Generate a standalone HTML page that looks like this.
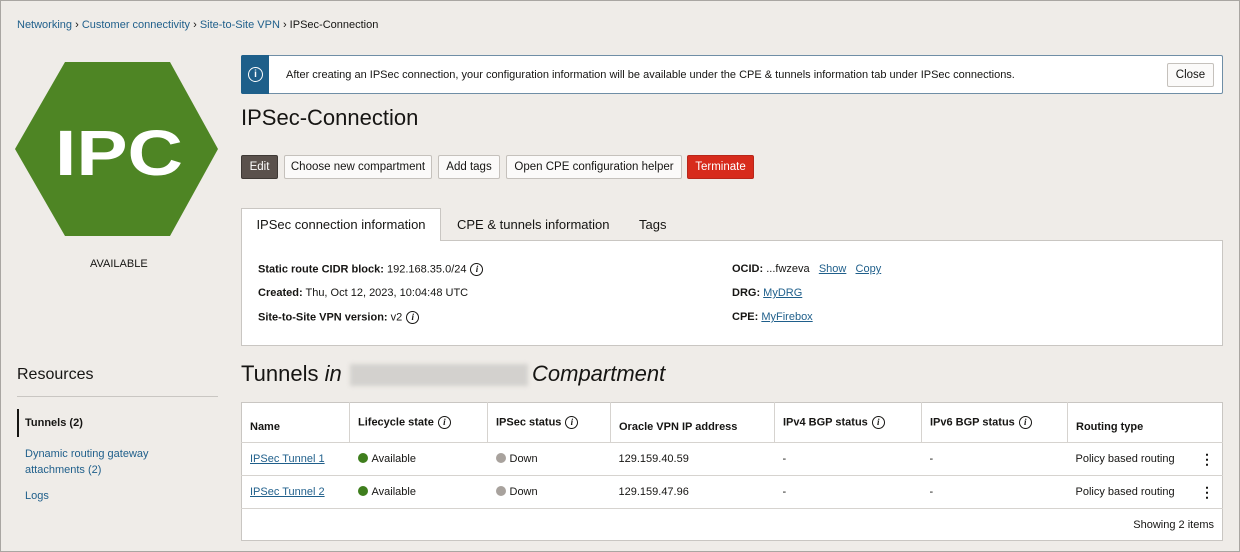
<!DOCTYPE html>
<html><head><meta charset="utf-8">
<style>
*{box-sizing:border-box;margin:0;padding:0}
body{width:1240px;height:552px;overflow:hidden;background:#efece8;font-family:"Liberation Sans",Arial,sans-serif;color:#161513;position:relative;font-size:11px}
.frame{position:absolute;inset:0;border:1px solid #a9a6a2}
.a{position:absolute;white-space:nowrap}
a,.lnk{color:#1f5f8b}
.u{text-decoration:underline}
.btn{position:absolute;top:155px;height:24px;border:1px solid #c5c1bc;border-radius:2px;background:#fbfaf9;font-size:11.5px;line-height:22px;text-align:center;color:#161513}
.i{display:inline-block;width:13px;height:13px;border:1px solid #161513;border-radius:50%;font:italic bold 9px "Liberation Serif",serif;line-height:11px;text-align:center;vertical-align:middle;margin-left:4px}
table{position:absolute;left:241px;top:402px;width:982px;border-collapse:collapse;background:#fff;border:1px solid #c9c6c2;font-size:11px}
td,th{text-align:left;padding:0 8px;border-bottom:1px solid #d6d3cf}
th{height:40px;font-weight:bold;border-right:1px solid #d6d3cf;vertical-align:middle}
th:last-child{border-right:none}
td{height:33px;position:relative}
.dot{display:inline-block;width:10px;height:10px;border-radius:50%;vertical-align:-1px;margin-right:4px}
.keb{position:absolute;right:8px;top:8px;font-weight:bold;font-size:14px;line-height:16px}
</style></head><body>
<div class="frame"></div>
<div class="a" style="left:17px;top:19px;font-size:11px"><span class="lnk">Networking</span> › <span class="lnk">Customer connectivity</span> › <span class="lnk">Site-to-Site VPN</span> › IPSec-Connection</div>

<svg class="a" style="left:0;top:0" width="230" height="250"><polygon points="15,149 65,62 170,62 218,149 170,236 65,236" fill="#4e8524"/><text x="119" y="175" text-anchor="middle" font-family="Liberation Sans" font-weight="bold" font-size="64" textLength="128" lengthAdjust="spacingAndGlyphs" fill="#fff">IPC</text></svg>
<div class="a" style="left:90px;top:258px;font-size:11px">AVAILABLE</div>

<div class="a" style="left:17px;top:366px;font-size:16px">Resources</div>
<div class="a" style="left:17px;top:396px;width:201px;height:1px;background:#c9c6c2"></div>
<div class="a" style="left:17px;top:409px;width:2px;height:28px;background:#161513"></div>
<div class="a" style="left:25px;top:417px;font-weight:bold">Tunnels (2)</div>
<div class="a lnk" style="left:25px;top:446px;line-height:16px">Dynamic routing gateway<br>attachments (2)</div>
<div class="a lnk" style="left:25px;top:490px">Logs</div>

<div class="a" style="left:241px;top:55px;width:982px;height:39px;background:#fff;border:1px solid #6f8ea6;border-radius:2px"></div>
<div class="a" style="left:241px;top:55px;width:28px;height:39px;background:#1e5f8a;border-radius:2px 0 0 2px"></div>
<div class="a" style="left:248px;top:67px;width:15px;height:15px;border:1.5px solid #fff;border-radius:50%;color:#fff;font:bold 10px 'Liberation Sans';text-align:center;line-height:13px">i</div>
<div class="a" style="left:286px;top:69px;font-size:11px">After creating an IPSec connection, your configuration information will be available under the CPE &amp; tunnels information tab under IPSec connections.</div>
<div class="a" style="left:1167px;top:63px;width:47px;height:24px;border:1px solid #c5c1bc;border-radius:2px;background:#fbfaf9;text-align:center;line-height:22px;font-size:11.5px">Close</div>

<div class="a" style="left:241px;top:105px;font-size:22px">IPSec-Connection</div>

<div class="btn" style="left:241px;width:37px;background:#5a514c;border-color:#3e3935;color:#fff">Edit</div>
<div class="btn" style="left:284px;width:148px">Choose new compartment</div>
<div class="btn" style="left:438px;width:62px">Add tags</div>
<div class="btn" style="left:506px;width:176px">Open CPE configuration helper</div>
<div class="btn" style="left:687px;width:67px;background:#d72b1c;border-color:#b8261a;color:#fff">Terminate</div>

<div class="a" style="left:241px;top:240px;width:982px;height:106px;background:#fff;border:1px solid #c9c6c2"></div>
<div class="a" style="left:241px;top:208px;width:200px;height:33px;background:#fff;border:1px solid #c9c6c2;border-bottom:none;font-size:13px;text-align:center;line-height:32px">IPSec connection information</div>
<div class="a" style="left:457px;top:217px;font-size:13px">CPE &amp; tunnels information</div>
<div class="a" style="left:639px;top:217px;font-size:13px">Tags</div>

<div class="a" style="left:258px;top:263px"><b>Static route CIDR block:</b> 192.168.35.0/24<span class="i">i</span></div>
<div class="a" style="left:258px;top:287px"><b>Created:</b> Thu, Oct 12, 2023, 10:04:48 UTC</div>
<div class="a" style="left:258px;top:311px"><b>Site-to-Site VPN version:</b> v2<span class="i">i</span></div>
<div class="a" style="left:732px;top:263px"><b>OCID:</b> ...fwzeva &nbsp;&nbsp;<span class="lnk u">Show</span>&nbsp;&nbsp; <span class="lnk u">Copy</span></div>
<div class="a" style="left:732px;top:287px"><b>DRG:</b> <span class="lnk u">MyDRG</span></div>
<div class="a" style="left:732px;top:311px"><b>CPE:</b> <span class="lnk u">MyFirebox</span></div>

<div class="a" style="left:241px;top:361px;font-size:22px">Tunnels <i>in</i></div>
<div class="a" style="left:350px;top:364px;width:178px;height:22px;background:#d3d1ce;filter:blur(2px)"></div>
<div class="a" style="left:532px;top:361px;font-size:22px;font-style:italic">Compartment</div>

<table>
<tr><th style="width:108px;padding-top:8px">Name</th><th style="width:138px">Lifecycle state<span class="i">i</span></th><th style="width:123px">IPSec status<span class="i">i</span></th><th style="width:164px;padding-top:8px">Oracle VPN IP address</th><th style="width:147px">IPv4 BGP status<span class="i">i</span></th><th style="width:146px">IPv6 BGP status<span class="i">i</span></th><th style="padding-top:8px">Routing type</th></tr>
<tr><td><span class="lnk u">IPSec Tunnel 1</span></td><td><span class="dot" style="background:#3f7e1d"></span>Available</td><td><span class="dot" style="background:#a8a29d"></span>Down</td><td>129.159.40.59</td><td>-</td><td>-</td><td>Policy based routing<span class="keb">⋮</span></td></tr>
<tr><td><span class="lnk u">IPSec Tunnel 2</span></td><td><span class="dot" style="background:#3f7e1d"></span>Available</td><td><span class="dot" style="background:#a8a29d"></span>Down</td><td>129.159.47.96</td><td>-</td><td>-</td><td>Policy based routing<span class="keb">⋮</span></td></tr>
<tr><td colspan="7" style="height:32px;text-align:right;border-bottom:none">Showing 2 items</td></tr>
</table>
</body></html>
